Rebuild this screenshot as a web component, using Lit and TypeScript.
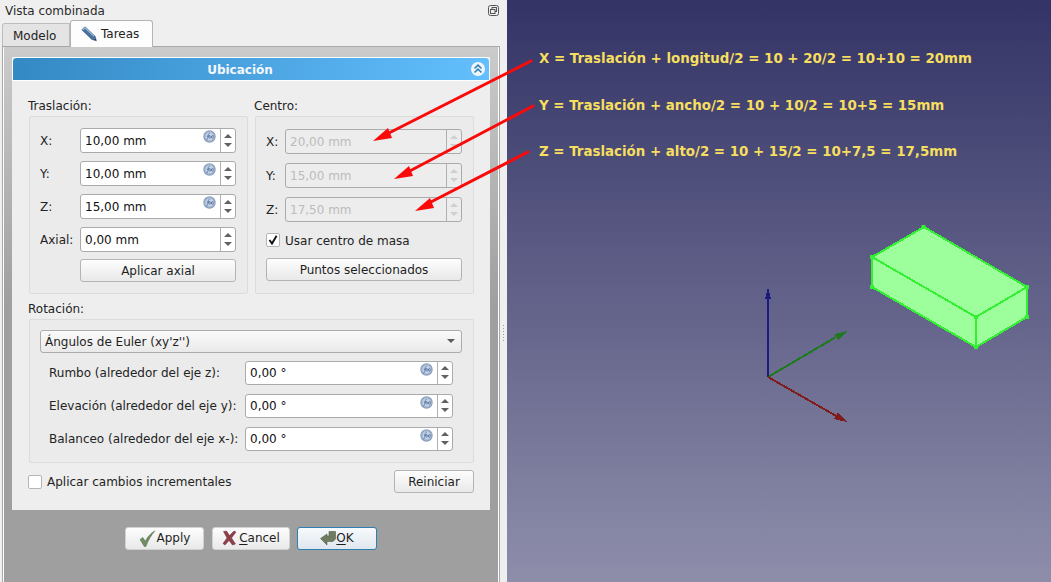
import { LitElement, html, css, svg } from "lit";
import { customElement } from "lit/decorators.js";

const fxIcon = html`<svg class="fx" width="13" height="13" viewBox="0 0 13 13">
  <circle cx="6.5" cy="6.5" r="5.6" fill="#a9bfd8" stroke="#8b9dbb" stroke-width="1.2"></circle>
  <circle cx="6.5" cy="6.5" r="3.6" fill="#c9d6e6"></circle>
  <path d="M3.4 9.6c1.2.3 1.3-.6 1.5-2l.4-3c.2-1 .9-1.2 1.4-1M3.8 6.2h2.4M6.6 5c-.7 1-.7 2.4 0 3.5M9.6 5c.7 1 .7 2.4 0 3.5M7.4 5.6l1.6 2.6M9 5.6 7.4 8.2" fill="none" stroke="#4a6a9c" stroke-width=".8"></path>
</svg>`;

function spinBox(value: string, opts: { fx?: boolean; disabled?: boolean } = {}) {
  return html`<div class="spin ${opts.disabled ? "off" : ""}">
    <span class="val">${value}</span>
    ${opts.fx ? fxIcon : ""}
    <span class="arrows"><i class="up"></i><i class="down"></i></span>
  </div>`;
}

@customElement("app-root")
export class AppRoot extends LitElement {
  static styles = css`
    :host {
      display: block;
      width: 1051px;
      height: 582px;
      overflow: hidden;
      font-family: "DejaVu Sans", sans-serif;
      font-size: 12px;
      line-height: 14px;
      color: #232323;
    }
    * { box-sizing: border-box; }
    .app { display: flex; width: 1051px; height: 582px; position: relative; }
    .pane {
      width: 507px;
      flex: none;
      background: #efefef;
      display: flex;
      flex-direction: column;
      position: relative;
    }
    .title {
      height: 20px;
      flex: none;
      display: flex;
      align-items: center;
      justify-content: space-between;
      padding: 0 8px 0 5px;
      color: #2a2a2a;
    }
    .title span { padding-top: 1px; }
    .tabs {
      height: 27px;
      flex: none;
      display: flex;
      align-items: flex-end;
      padding-left: 2px;
      position: relative;
      z-index: 1;
      margin-bottom: -1px;
    }
    .tab {
      height: 23px;
      width: 68px;
      margin-bottom: 1px;
      background: #e4e4e4;
      border: 1px solid #bdbdbd;
      border-bottom: none;
      border-radius: 3px 0 0 0;
      display: flex;
      align-items: center;
      padding: 1px 0 0 10px;
    }
    .tab.on {
      height: 27px;
      width: 83px;
      margin-bottom: 0;
      background: #fdfdfd;
      border-color: #b4b4b4;
      border-radius: 3px 3px 0 0;
      padding: 0 0 0 10px;
      gap: 4px;
    }
    .panel {
      flex: 1;
      margin: 0 7px 0 2px;
      border: 1px solid #a8a8a8;
      border-bottom: none;
      box-shadow: inset 1px 0 0 #fff, inset -1px 0 0 #fff;
      background: linear-gradient(#cbcbcb, #9f9f9f 48%, #9f9f9f);
      padding: 10px 9px 0 9px;
      display: flex;
      flex-direction: column;
    }
    .box { background: #eeeeee; display: flex; flex-direction: column; }
    .box-head {
      height: 24px;
      border: 1px solid #fff;
      border-bottom-width: 1px;
      border-radius: 4px 4px 0 0;
      background: linear-gradient(90deg, #3389c4, #63bffd);
      display: flex;
      align-items: center;
      justify-content: center;
      padding: 1px 22px 0 0;
      color: #f4f8fc;
      font-weight: 700;
      position: relative;
    }
    .collapse { position: absolute; right: 4px; top: 4px; }
    .box-body { padding: 17px 16px 17px 17px; display: flex; flex-direction: column; }
    .cols { display: grid; grid-template-columns: 219px 219px; column-gap: 7px; }
    .cap { margin-left: -1px; height: 14px; }
    .cols .cap { padding-top: 1px; }
    .group {
      margin-top: 4px;
      border: 1px solid #dcdcdc;
      border-radius: 2px;
      background: #ebebeb;
    }
    .g-left {
      height: 178px;
      padding: 11px 11px 0 10px;
      display: grid;
      grid-template-columns: 40px 156px;
      grid-auto-rows: 25px;
      row-gap: 8px;
      align-items: center;
    }
    .g-left .btn { grid-column: 2; height: 23px; margin-top: -1px; align-self: start; }
    .g-right {
      height: 178px;
      padding: 12px 11px 0 10px;
      display: grid;
      grid-template-columns: 19px 177px;
      grid-auto-rows: 25px;
      row-gap: 9px;
      align-items: center;
    }
    .check-row {
      grid-column: 1 / 3;
      display: flex;
      align-items: center;
      height: 14px;
      gap: 5px;
      margin-top: 2px;
      align-self: start;
    }
    .check-row span:last-child { padding-top: 1px; }
    .g-right .btn { grid-column: 1 / 3; height: 23px; margin-top: -7px; align-self: start; }
    .spin {
      height: 25px;
      border: 1px solid #ababab;
      border-radius: 3px;
      background: #fff;
      display: flex;
      align-items: center;
      padding-left: 4px;
      color: #111;
      position: relative;
    }
    .spin .val { flex: 1; padding-top: 1px; }
    .spin.off { background: #ededed; color: #bcbcbc; }
    .fx { position: absolute; right: 19px; top: 1px; }
    .arrows {
      width: 15px;
      align-self: stretch;
      border-left: 1px solid #b0b0b0;
      display: flex;
      flex-direction: column;
      align-items: center;
      justify-content: center;
      gap: 5px;
      flex: none;
    }
    .arrows i { width: 0; height: 0; border-left: 4px solid transparent; border-right: 4px solid transparent; }
    .arrows .up { border-bottom: 4px solid #616161; }
    .arrows .down { border-top: 4px solid #616161; }
    .off .arrows .up { border-bottom-color: #cfcfcf; }
    .off .arrows .down { border-top-color: #cfcfcf; }
    .btn {
      border: 1px solid #b4b4b4;
      border-radius: 3px;
      background: linear-gradient(#fdfdfd, #e9e9e9);
      display: flex;
      align-items: center;
      justify-content: center;
      color: #1e1e1e;
    }
    .cb {
      width: 14px;
      height: 14px;
      border: 1px solid #b5b5b5;
      border-radius: 2px;
      background: #fff;
      flex: none;
      display: flex;
      align-items: center;
      justify-content: center;
    }
    .rot-label { margin-top: 8px; }
    .g-rot {
      margin-top: 3px;
      height: 144px;
      padding: 10px 11px 0 10px;
      display: flex;
      flex-direction: column;
    }
    .combo {
      height: 22.5px;
      border: 1px solid #acacac;
      border-radius: 3px;
      background: linear-gradient(#fbfbfb, #e9e9e9);
      display: flex;
      align-items: center;
      justify-content: space-between;
      padding: 0 6px 0 4px;
      margin-bottom: 8px;
      color: #1e1e1e;
    }
    .combo span { padding-top: 1px; }
    .combo i { width: 0; height: 0; border-left: 4px solid transparent; border-right: 4px solid transparent; border-top: 4px solid #5c5c5c; }
    .rot-row {
      display: grid;
      grid-template-columns: 196px 208px;
      align-items: center;
      height: 24.5px;
      margin-bottom: 8.5px;
      padding-left: 9px;
    }
    .rot-row .spin { height: 24.5px; }
    .foot { display: flex; align-items: center; justify-content: space-between; margin-top: 7px; height: 23px; }
    .foot .left { display: flex; align-items: center; gap: 5px; margin-left: -1px; }
    .foot .btn { width: 80px; height: 23px; }
    .actions { margin-top: 17px; display: flex; margin-left: 113px; }
    .act { height: 23px; gap: 1px; border-color: #d2d2d2; padding-bottom: 1px; }
    .act svg { flex: none; }
    .act.apply { width: 79px; margin-right: 8px; }
    .act.cancel { width: 78px; margin-right: 7px; gap: 2px; }
    .act.ok { width: 80px; gap: 0; border-color: #2f7fb3; background: linear-gradient(#f7fafc, #dfe7ee); }
    u { text-underline-offset: 2px; }
    .grip { position: absolute; left: 503px; top: 325px; width: 1px; height: 16px;
      background: repeating-linear-gradient(#9a9a9a 0 1px, transparent 1px 3px); }
    .view {
      flex: 1;
      position: relative;
      background: linear-gradient(#333366, #8e8eab);
    }
    .note {
      position: absolute;
      left: 32px;
      font-weight: 700;
      font-size: 13.39px;
      line-height: 16px;
      color: #f6de5f;
      white-space: nowrap;
    }
    .n1 { top: 51px; }
    .n2 { top: 98px; }
    .n3 { top: 144px; }
    .canvas { position: absolute; left: 0; top: 0; pointer-events: none; }
  `;

  render() {
    return html`<div class="app">
      <div class="pane">
        <div class="title">
          <span>Vista combinada</span>
          <svg width="11" height="11" viewBox="0 0 11 11" fill="none" stroke="#555">
            <rect x=".5" y=".5" width="10" height="10" rx="2"></rect>
            <rect x="4" y="2.5" width="4.5" height="4" fill="#efefef"></rect>
            <rect x="2.5" y="4.5" width="4.5" height="4" fill="#efefef"></rect>
          </svg>
        </div>
        <div class="tabs">
          <div class="tab">Modelo</div>
          <div class="tab on">
            <svg width="16" height="16" viewBox="0 0 16 16">
              <path d="M.8 3.800 4 .8 14 10.200 15.400 14.800 10.800 13.400Z" fill="#47709f" stroke="#34557f" stroke-width=".6"></path>
              <path d="M1.800 3.800 3.900 1.800 13 10.400" fill="none" stroke="#9dbbdc" stroke-width="1.100"></path>
              <path d="M13.400 13.600 15 14.600 14.500 12.800Z" fill="#222"></path>
            </svg>
            <span>Tareas</span>
          </div>
        </div>
        <div class="panel">
          <div class="box">
            <div class="box-head">
              <span>Ubicación</span>
              <svg class="collapse" width="14" height="14" viewBox="0 0 14 14" fill="none">
                <circle cx="7" cy="7" r="7" fill="#f2f6fa"></circle>
                <path d="M3.500 6.500 7 3.200l3.500 3.300M3.500 10.500 7 7.200l3.500 3.300" stroke="#2f82bc" stroke-width="1.600"></path>
              </svg>
            </div>
            <div class="box-body">
              <div class="cols">
                <div>
                  <div class="cap">Traslación:</div>
                  <div class="group g-left">
                    <span>X:</span>${spinBox("10,00 mm", { fx: true })}
                    <span>Y:</span>${spinBox("10,00 mm", { fx: true })}
                    <span>Z:</span>${spinBox("15,00 mm", { fx: true })}
                    <span>Axial:</span>${spinBox("0,00 mm")}
                    <div class="btn">Aplicar axial</div>
                  </div>
                </div>
                <div>
                  <div class="cap">Centro:</div>
                  <div class="group g-right">
                    <span>X:</span>${spinBox("20,00 mm", { disabled: true })}
                    <span>Y:</span>${spinBox("15,00 mm", { disabled: true })}
                    <span>Z:</span>${spinBox("17,50 mm", { disabled: true })}
                    <div class="check-row">
                      <span class="cb">
                        <svg width="10" height="10" viewBox="0 0 10 10"><path d="M1.500 5 4 8.600 8.600 .8" fill="none" stroke="#111" stroke-width="1.900"></path></svg>
                      </span>
                      <span>Usar centro de masa</span>
                    </div>
                    <div class="btn">Puntos seleccionados</div>
                  </div>
                </div>
              </div>
              <div class="cap rot-label">Rotación:</div>
              <div class="group g-rot">
                <div class="combo"><span>Ángulos de Euler (xy'z'')</span><i></i></div>
                <div class="rot-row"><span>Rumbo (alrededor del eje z):</span>${spinBox("0,00 °", { fx: true })}</div>
                <div class="rot-row"><span>Elevación (alrededor del eje y):</span>${spinBox("0,00 °", { fx: true })}</div>
                <div class="rot-row"><span>Balanceo (alrededor del eje x-):</span>${spinBox("0,00 °", { fx: true })}</div>
              </div>
              <div class="foot">
                <div class="left"><span class="cb"></span><span>Aplicar cambios incrementales</span></div>
                <div class="btn">Reiniciar</div>
              </div>
            </div>
          </div>
          <div class="actions">
            <div class="btn act apply">
              <svg width="17" height="17" viewBox="0 0 16 16"><path d="M1 9 3.500 7 6 10.500C8 6.500 11 3 15 .8 11.500 5 8.500 10 6.500 15.500H5Z" fill="#6f8c62" stroke="#55704a" stroke-width=".5"></path></svg>
              <span>Apply</span>
            </div>
            <div class="btn act cancel">
              <svg width="15" height="16" viewBox="0 0 15 16"><path d="M1.500 1.500 4.500 1 7.500 5.500 12 1 14 2 9.500 8 13.500 14 10.500 15 7 10.500 3 15 1 13.500 5 8Z" fill="#8f3f4c" stroke="#6e2d38" stroke-width=".5"></path></svg>
              <span><u>C</u>ancel</span>
            </div>
            <div class="btn act ok">
              <svg width="16" height="15" viewBox="0 0 16 15"><path d="M.5 7.500 7 3V5H9V.5H15.500V8L13 10.500H7V14Z" fill="#6f7c5f" stroke="#565f49" stroke-width=".6"></path></svg>
              <span><u>O</u>K</span>
            </div>
          </div>
        </div>
        <div class="grip"></div>
      </div>
      <div class="view">
        <div class="note n1">X = Traslación + longitud/2 = 10 + 20/2 = 10+10 = 20mm</div>
        <div class="note n2">Y = Traslación + ancho/2 = 10 + 10/2 = 10+5 = 15mm</div>
        <div class="note n3">Z = Traslación + alto/2 = 10 + 15/2 = 10+7,5 = 17,5mm</div>
      </div>
      <svg class="canvas" width="1051" height="582" viewBox="0 0 1051 582">
        ${svg`
        <g stroke="#33f033" stroke-width="2" stroke-linejoin="round" fill="#9cff9c" shape-rendering="crispEdges">
          <path d="M924 227 1027 287 976 317 872 257Z"></path>
          <path d="M872 257 976 317V347L872 287Z"></path>
          <path d="M976 317 1027 287V317L976 347Z"></path>
        </g>
        <g fill="#33f033">
          <rect x="921.500" y="225" width="4" height="4"></rect>
          <rect x="870" y="255" width="4" height="4"></rect>
          <rect x="870" y="285" width="4" height="4"></rect>
          <rect x="974" y="315" width="4" height="4"></rect>
          <rect x="974" y="345" width="4" height="4"></rect>
          <rect x="1025" y="285" width="4" height="4"></rect>
          <rect x="1025" y="315" width="4" height="4"></rect>
        </g>
        <g shape-rendering="crispEdges">
          <path d="M768 377V298" stroke="#1c1c80" stroke-width="2"></path>
          <path d="M768 287 771 299 765 299Z" fill="#1c1c80"></path>
          <path d="M768 377 836 337" stroke="#1f7a1f" stroke-width="2"></path>
          <path d="M847 331 838.500 340 834.500 334Z" fill="#1f7a1f"></path>
          <path d="M768 377 838 417" stroke="#7f1c1c" stroke-width="2"></path>
          <path d="M847 422 834 419 838 412Z" fill="#7f1c1c"></path>
        </g>
        <g stroke="#fb0a0a" stroke-width="3" stroke-linecap="round">
          <path d="M531 61 385 135"></path>
          <path d="M533 106 406 173"></path>
          <path d="M528 152 427 204"></path>
        </g>
        <g fill="#fb0a0a">
          <path d="M373 141 388 128 392 138Z"></path>
          <path d="M394 179 409 166 413 176Z"></path>
          <path d="M415 211 430 198 434 208Z"></path>
        </g>
        `}
      </svg>
    </div>`;
  }
}
